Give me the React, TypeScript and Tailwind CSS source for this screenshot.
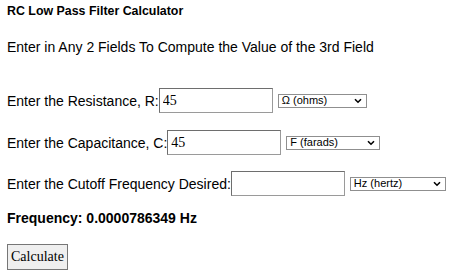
import React, { useState } from 'react';

function Chevron() {
  return (
    <svg width="8" height="6" viewBox="0 0 8 6" className="shrink-0">
      <path d="M1 1.2 L4 4.2 L7 1.2" fill="none" stroke="#000" strokeWidth="1.6" />
    </svg>
  );
}

function UnitSelect({ label, width }: { label: string; width: string }) {
  return (
    <div
      className={`${width} h-[14px] ml-[5px] flex items-center justify-between border border-[#8f8f8f] bg-white pl-[3px] pr-[4px] text-[11px] leading-none`}
    >
      <span>{label}</span>
      <Chevron />
    </div>
  );
}

function Field({ label, value, unit, selW }: { label: string; value: string; unit: string; selW: string }) {
  const [v, setV] = useState(value);
  return (
    <div className="flex items-center h-[25px]">
      <span className="leading-none">{label}</span>
      <input
        value={v}
        onChange={e => setV(e.target.value)}
        className="w-[114px] h-[25px] border border-[#9a9a9a] border-t-[#6e6e6e] border-l-[#6e6e6e] px-[3px] font-['Liberation_Serif','Times_New_Roman',serif] text-[14px] outline-none"
      />
      <UnitSelect label={unit} width={selW} />
    </div>
  );
}

export default function App() {
  return (
    <div className="w-[450px] h-[277px] bg-white text-black pl-[7px] font-['Liberation_Sans',Arial,sans-serif] text-[14px]">
      <div className="font-bold text-[12.4px] leading-[22px]">RC Low Pass Filter Calculator</div>
      <div className="mt-[14px] leading-[22px]">Enter in Any 2 Fields To Compute the Value of the 3rd Field</div>

      <div className="mt-[30px]">
        <Field label="Enter the Resistance, R:" value="45" unit="Ω (ohms)" selW="w-[89px]" />
      </div>
      <div className="mt-[17px]">
        <Field label="Enter the Capacitance, C:" value="45" unit="F (farads)" selW="w-[94px]" />
      </div>
      <div className="mt-[16px]">
        <Field label="Enter the Cutoff Frequency Desired:" value="" unit="Hz (hertz)" selW="w-[96px]" />
      </div>

      <div className="mt-[12px] font-bold leading-[20px]">Frequency: 0.0000786349 Hz</div>

      <button className="mt-[16px] h-[26px] px-[3px] border border-[#767676] bg-[#efefef] font-['Liberation_Serif','Times_New_Roman',serif] text-[14px] leading-none">
        Calculate
      </button>
    </div>
  );
}
